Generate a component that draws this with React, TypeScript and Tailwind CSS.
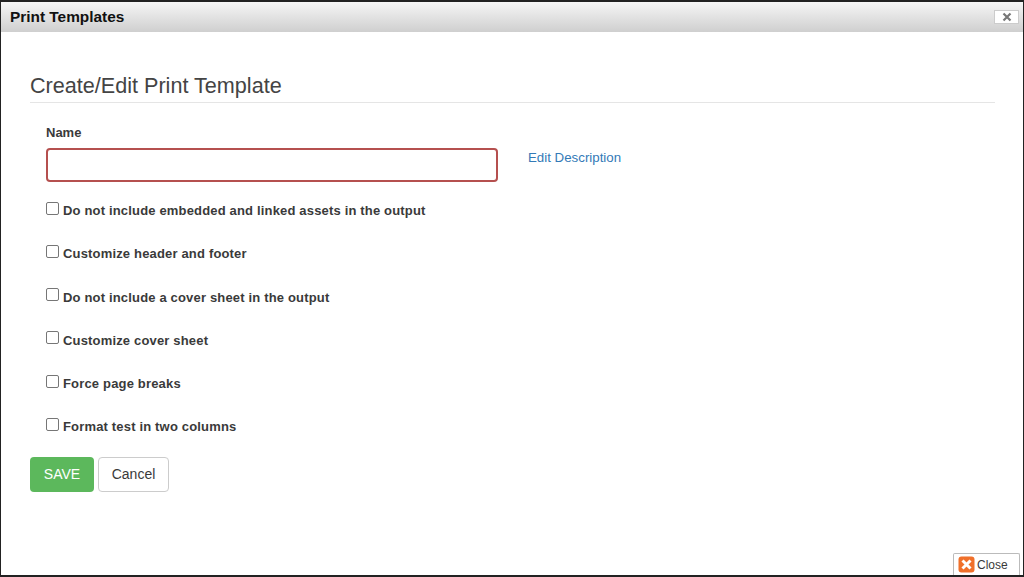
import React from 'react';

const options = [
  'Do not include embedded and linked assets in the output',
  'Customize header and footer',
  'Do not include a cover sheet in the output',
  'Customize cover sheet',
  'Force page breaks',
  'Format test in two columns',
];

export default function App() {
  return (
    <div className="w-[1024px] h-[577px] overflow-hidden flex flex-col bg-white border-l border-r border-[#222] border-t-2 border-b-2 font-['Liberation_Sans',sans-serif] text-[#3a3a3a]">
      {/* Title bar */}
      <div className="h-[30px] shrink-0 flex items-center justify-between pl-[9px] pr-[4px] bg-gradient-to-b from-[#f6f6f6] to-[#cfcfcf]">
        <span className="text-[15.4px] font-bold text-[#111]">Print Templates</span>
        <button className="w-[25px] h-[14px] flex items-center justify-center bg-white border border-[#ccc]">
          <svg width="10" height="10" viewBox="0 0 10 10">
            <path d="M1.5 1.5L8.5 8.5M8.5 1.5L1.5 8.5" stroke="#777" strokeWidth="2.2" />
          </svg>
        </button>
      </div>

      {/* Form */}
      <div className="flex-1 min-h-0 flex flex-col pl-[29px] pr-[28px] pt-[41px]">
        <h2 className="text-[21.6px] leading-[26px] text-[#444] border-b border-[#e5e5e5] pb-[3px]">Create/Edit Print Template</h2>

        <div className="pl-[16px] pt-[21px]">
          <label className="block text-[13px] leading-[17px] font-bold">Name</label>
          <div className="flex mt-[7px]">
            <input className="w-[452px] h-[34px] rounded-[4px] border-2 border-[#b5504f] bg-white outline-none" />
            <a className="ml-[30px] text-[13.3px] leading-[20px] text-[#337ab7]">Edit Description</a>
          </div>
          <div className="flex flex-col gap-[28.2px] mt-[21.3px]">
            {options.map((label) => (
              <label key={label} className="flex items-center h-[15px]">
                <span className="w-[13px] h-[13px] mr-[4px] -mt-[5px] rounded-[2px] border border-[#767676] bg-white" />
                <span className="text-[13px] leading-[15px] font-bold tracking-[0.17px]">{label}</span>
              </label>
            ))}
          </div>
        </div>

        <div className="flex gap-[4px] mt-[22.7px]">
          <button className="w-[64px] h-[35px] rounded-[4px] bg-[#5cb85c] text-white text-[14px]">SAVE</button>
          <button className="w-[71px] h-[35px] rounded-[4px] bg-white border border-[#ccc] text-[14px] text-[#3a3a3a]">Cancel</button>
        </div>

        <div className="flex-1 min-h-0 flex items-end justify-end -mr-[25px]">
          <button className="w-[67px] h-[22px] flex items-center gap-[2px] pl-[4px] bg-white border border-[#bbb] border-b-0 rounded-t-[2px] text-[12px] text-[#3a3a3a]">
            <svg width="17" height="17" viewBox="0 0 17 17" className="shrink-0">
              <rect x="0.5" y="0.5" width="16" height="16" rx="3" fill="#f0702a" />
              <path d="M4.5 4.5L12.5 12.5M12.5 4.5L4.5 12.5" stroke="#fff" strokeWidth="3" />
            </svg>
            Close
          </button>
        </div>
      </div>
    </div>
  );
}
